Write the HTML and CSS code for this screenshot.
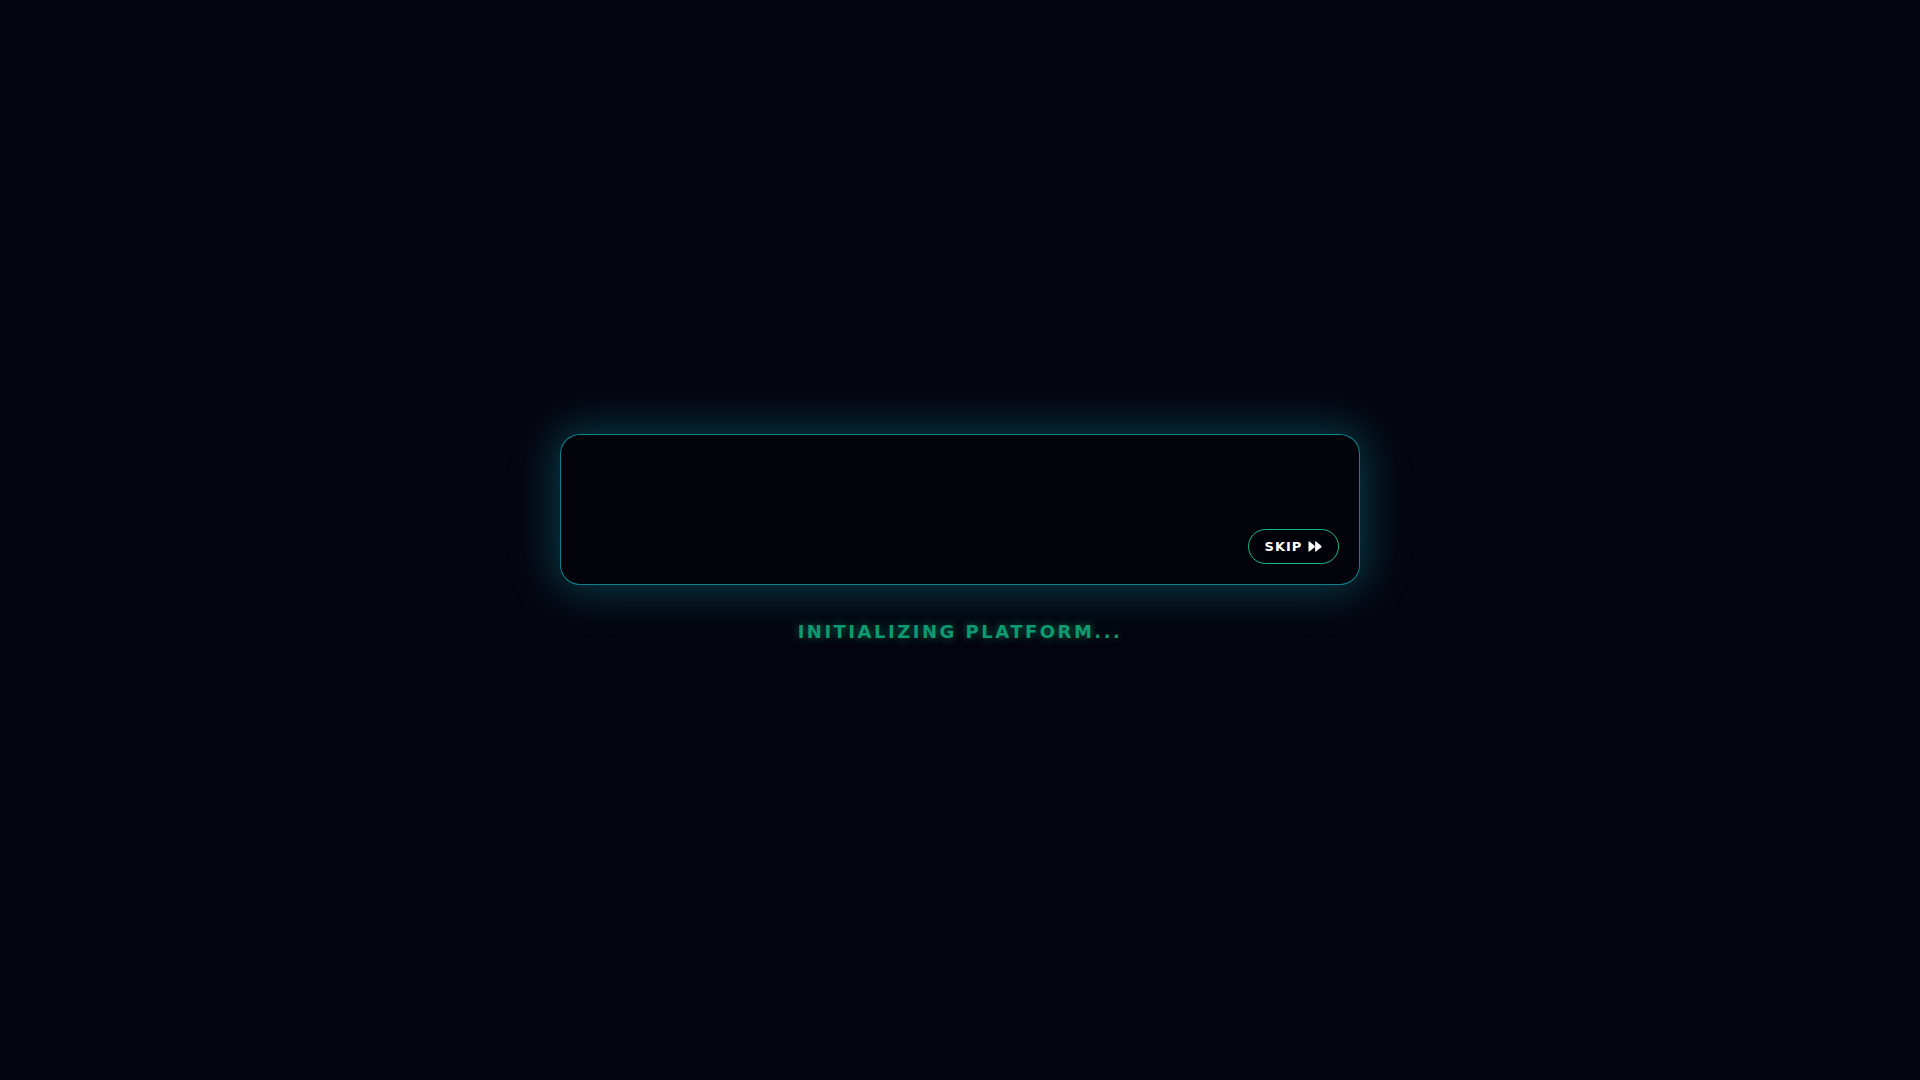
FILE: index.html
```html
<!DOCTYPE html>
<html lang="en">
<head>
<meta charset="utf-8">
<title>Initializing</title>
<link rel="stylesheet" href="styles.css">
</head>
<body>
<main class="loader">
  <div class="panel">
    <button class="skip" type="button">
      <span class="skip-label">SKIP</span>
      <svg class="skip-icon" viewBox="0 0 14 11" width="14" height="11" aria-hidden="true">
        <path d="M0.5 1 Q0.5 0 1.4 0.5 L6.6 4.7 Q7.1 5.5 6.6 6.3 L1.4 10.5 Q0.5 11 0.5 10 Z" fill="#ffffff"/>
        <path d="M7.1 1 Q7.1 0 8 0.5 L13.2 4.7 Q13.7 5.5 13.2 6.3 L8 10.5 Q7.1 11 7.1 10 Z" fill="#ffffff"/>
      </svg>
    </button>
  </div>
  <p class="status">INITIALIZING PLATFORM...</p>
</main>
</body>
</html>
```
FILE: styles.css
```css
html, body {
  margin: 0;
  padding: 0;
  height: 100%;
}
body {
  background: #05050f;
  font-family: "DejaVu Sans", "Noto Sans", sans-serif;
  overflow: hidden;
}
.loader {
  height: 100vh;
  display: flex;
  flex-direction: column;
  align-items: center;
  justify-content: center;
  gap: 32px;
}
.panel {
  box-sizing: border-box;
  width: 800px;
  height: 151px;
  border: 1px solid rgba(20, 170, 185, 0.75);
  border-radius: 20px;
  background: #03030b;
  box-shadow: 0 0 44px 6px rgba(6, 165, 185, 0.34);
  display: flex;
  align-items: flex-end;
  justify-content: flex-end;
  padding: 0 20px 20px 0;
}
.skip {
  box-sizing: border-box;
  height: 35px;
  width: 91px;
  border: 1px solid #10b981;
  border-radius: 999px;
  background: #02030a;
  color: #ffffff;
  display: flex;
  align-items: center;
  justify-content: center;
  gap: 6px;
  padding: 0;
  font-family: "DejaVu Sans", sans-serif;
  font-weight: 700;
  font-size: 13px;
  letter-spacing: 1px;
  cursor: pointer;
}
.skip-label {
  line-height: 1;
}
.skip-icon {
  display: block;
  width: 14px;
  height: 11px;
}
.status {
  margin: 0;
  color: #0e9a70;
  font-family: "DejaVu Sans", sans-serif;
  font-weight: 700;
  font-size: 18px;
  line-height: 30px;
  letter-spacing: 2.5px;
  text-shadow: 0 0 8px rgba(16, 185, 129, 0.55);
}
```
